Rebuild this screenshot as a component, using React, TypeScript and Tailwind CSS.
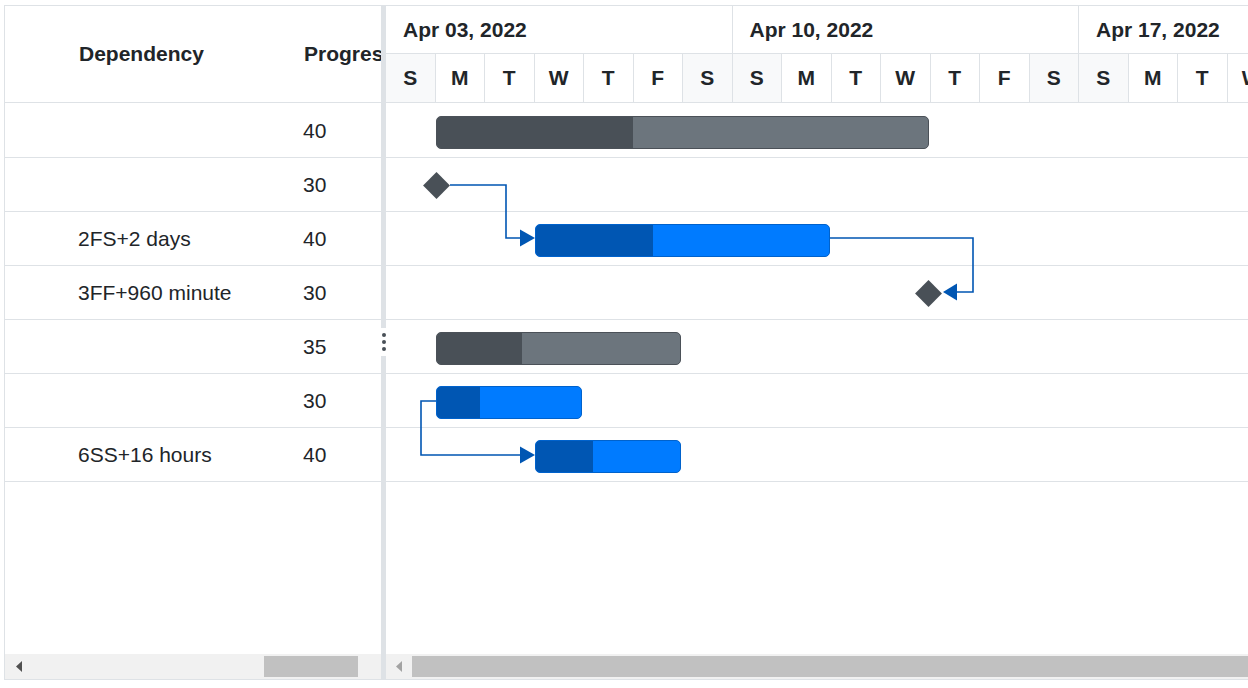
const DAY = 49.5
const dayLetters = ['S', 'M', 'T', 'W', 'T', 'F', 'S']
const weeks = ['Apr 03, 2022', 'Apr 10, 2022', 'Apr 17, 2022']

type Bar = { start: number; days: number; kind: 'gray' | 'blue' }
type Row = { dep: string; progress: number; bar?: Bar; milestone?: number }

const rows: Row[] = [
  { dep: '', progress: 40, bar: { start: 1, days: 10, kind: 'gray' } },
  { dep: '', progress: 30, milestone: 50.5 },
  { dep: '2FS+2 days', progress: 40, bar: { start: 3, days: 6, kind: 'blue' } },
  { dep: '3FF+960 minute', progress: 30, milestone: 542.5 },
  { dep: '', progress: 35, bar: { start: 1, days: 5, kind: 'gray' } },
  { dep: '', progress: 30, bar: { start: 1, days: 3, kind: 'blue' } },
  { dep: '6SS+16 hours', progress: 40, bar: { start: 3, days: 3, kind: 'blue' } },
]

function TaskBar({ bar, progress }: { bar: Bar; progress: number }) {
  const gray = bar.kind === 'gray'
  return (
    <div
      className={`absolute top-[12px] h-[33px] rounded-[5px] border overflow-hidden ${
        gray ? 'bg-[#6c757d] border-[#4b5158]' : 'bg-[#007bff] border-[#0062cc]'
      }`}
      style={{ left: bar.start * DAY, width: bar.days * DAY - 2 }}
    >
      <div
        className={`h-full ${gray ? 'bg-[#495057]' : 'bg-[#0056b3]'}`}
        style={{ width: `${progress}%` }}
      />
    </div>
  )
}

function ArrowLeft({ color }: { color: string }) {
  return (
    <svg width="6" height="11" viewBox="0 0 6 11">
      <polygon points="6,0 0,5.5 6,11" fill={color} />
    </svg>
  )
}

export default function App() {
  return (
    <div className="w-[1248px] h-[688px] bg-white overflow-hidden font-['Liberation_Sans',Arial,sans-serif] text-[#212529]">
      <div className="ml-[4px] mt-[5px] w-[1300px] h-[675px] border border-r-0 border-[#dee2e6] flex">
        {/* grid side */}
        <div className="w-[376px] shrink-0 flex flex-col overflow-hidden">
          <div className="h-[97px] shrink-0 border-b border-[#dee2e6] flex items-center text-[21px] font-bold whitespace-nowrap">
            <div className="w-[61px] shrink-0" />
            <div className="w-[225px] shrink-0 pl-[13px]">Dependency</div>
            <div className="w-[150px] shrink-0 pl-[13px]">Progress</div>
          </div>
          <div className="flex-1 pt-px">
            {rows.map((r, i) => (
              <div key={i} className="h-[54px] border-b border-[#dee2e6] flex items-center text-[21px] whitespace-nowrap">
                <div className="w-[61px] shrink-0" />
                <div className="w-[225px] shrink-0 pl-[12px]">{r.dep}</div>
                <div className="w-[150px] shrink-0 pl-[12px]">{r.progress}</div>
              </div>
            ))}
          </div>
          <div className="h-[25px] shrink-0 bg-[#f1f1f1] flex items-center">
            <div className="w-[26px] shrink-0 flex justify-center pl-[2px]">
              <ArrowLeft color="#505050" />
            </div>
            <div className="ml-[233px] w-[94px] h-[21px] bg-[#c1c1c1]" />
          </div>
        </div>

        {/* splitter */}
        <div className="w-[5px] shrink-0 bg-[#dee2e6] relative">
          <div className="absolute top-[322px] left-0 w-[5px] h-[28px] bg-white flex flex-col items-center justify-center gap-[3px]">
            <span className="w-[4px] h-[4px] rounded-full bg-[#495057]" />
            <span className="w-[4px] h-[4px] rounded-full bg-[#495057]" />
            <span className="w-[4px] h-[4px] rounded-full bg-[#495057]" />
          </div>
        </div>

        {/* chart side */}
        <div className="flex-1 min-w-0 flex flex-col overflow-hidden">
          <div className="h-[97px] shrink-0">
            <div className="h-[48px] border-b border-[#dee2e6] flex">
              {weeks.map((w) => (
                <div key={w} className="w-[346.5px] shrink-0 border-r border-[#dee2e6] pl-[17px] flex items-center text-[21px] font-bold whitespace-nowrap">
                  {w}
                </div>
              ))}
            </div>
            <div className="h-[49px] border-b border-[#dee2e6] flex">
              {weeks.flatMap((w) =>
                dayLetters.map((d, j) => (
                  <div
                    key={w + j}
                    className={`w-[49.5px] shrink-0 border-r border-[#dee2e6] flex items-center justify-center text-[21px] font-bold ${
                      j === 0 || j === 6 ? 'bg-[#f8f9fa]' : 'bg-white'
                    }`}
                  >
                    {d}
                  </div>
                ))
              )}
            </div>
          </div>

          <div className="flex-1 relative pt-px">
            {rows.map((r, i) => (
              <div key={i} className="h-[54px] border-b border-[#dee2e6] relative">
                {r.bar && <TaskBar bar={r.bar} progress={r.progress} />}
                {r.milestone !== undefined && (
                  <div
                    className="absolute top-[18px] w-[19px] h-[19px] bg-[#495057] rotate-45"
                    style={{ left: r.milestone - 9.5 }}
                  />
                )}
              </div>
            ))}
            <svg className="absolute inset-0 pointer-events-none" width="900" height="551">
              <g fill="none" stroke="#0056b3" strokeWidth="1.6">
                <path d="M64 82 H120 V135 H134" />
                <path d="M444 135 H587 V189 H571" />
                <path d="M50 298 H35 V352 H134" />
              </g>
              <g fill="#0056b3">
                <polygon points="134,126.5 149,135 134,143.5" />
                <polygon points="571,180.5 557,189 571,197.5" />
                <polygon points="134,343.5 149,352 134,360.5" />
              </g>
            </svg>
          </div>

          <div className="h-[25px] shrink-0 bg-[#f1f1f1] flex items-center">
            <div className="w-[26px] shrink-0 flex justify-center">
              <ArrowLeft color="#a3a3a3" />
            </div>
            <div className="flex-1 h-[21px] bg-[#c1c1c1]" />
          </div>
        </div>
      </div>
    </div>
  )
}
